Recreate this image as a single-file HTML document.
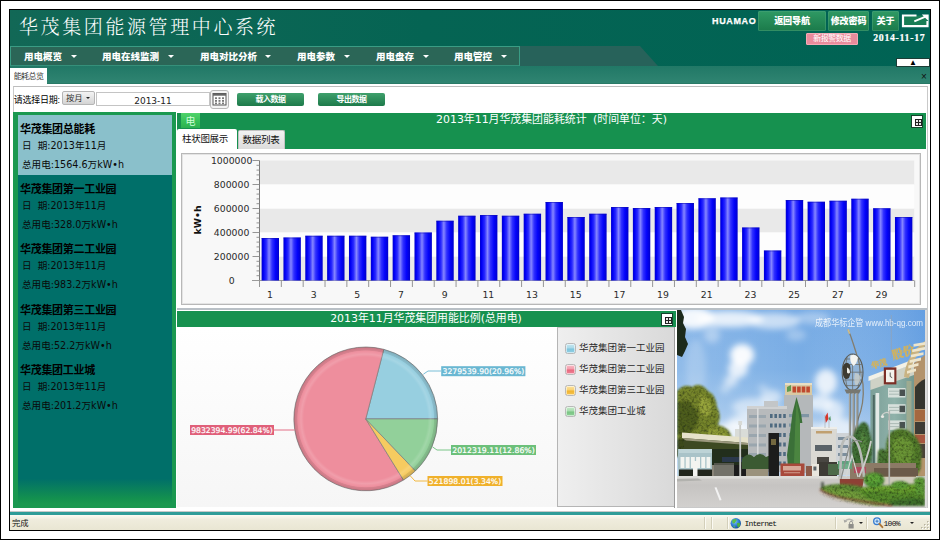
<!DOCTYPE html>
<html lang="zh-CN">
<head>
<meta charset="utf-8">
<title>华茂集团能源管理中心系统</title>
<style>
*{box-sizing:border-box;margin:0;padding:0}
html,body{width:940px;height:540px;overflow:hidden;background:#fff}
body{position:relative;font-family:"Liberation Sans","Noto Sans CJK SC",sans-serif;font-size:12px;color:#000}
.abs{position:absolute}
#outer{left:0;top:0;width:940px;height:540px;border:1px solid #000;background:#fff}
#frame{left:9px;top:9px;width:922px;height:522px;border:1px solid #000;background:#fff;overflow:hidden}
/* coordinates inside #app are page coordinates minus 10 */
#app{left:0;top:0;width:920px;height:520px}
#hdr{left:0;top:0;width:920px;height:56px;background:linear-gradient(90deg,#126856 0%,#056453 45%,#006354 100%)}
#title{left:9px;top:0.6px;height:34px;line-height:34px;font-family:"Liberation Serif","Noto Serif CJK SC",serif;font-weight:300;font-size:19px;letter-spacing:2.6px;color:#fff;white-space:nowrap}
#navshadow{left:509px;top:36px;width:140px;height:20px;background:#27625a;clip-path:polygon(0 0,121px 0,139px 20px,0 20px)}
#nav{left:0;top:36px;width:510px;height:21px;background:#2b6657;border:1px solid #3a9c84;border-bottom:2px solid #35907a}
.nv{top:37.5px;height:18px;line-height:18px;color:#fff;font-weight:900;font-size:9.5px;white-space:nowrap;letter-spacing:0}
.nv i{position:absolute;top:7.5px;width:0;height:0;border:3px solid transparent;border-top:3.5px solid #fff;margin-left:-0.5px}
#tabbar{left:0;top:56px;width:920px;height:18px;background:linear-gradient(180deg,#217866 0%,#2f8471 92%,#267461 100%)}
#tab1{left:0;top:58px;width:37px;height:16px;background:#fff;color:#3a3a3a;font-size:8px;line-height:18px;text-align:center;letter-spacing:-0.6px;white-space:nowrap}
.hb{top:1px;height:20px;border-radius:2px;background:linear-gradient(180deg,#2f9a64 0%,#1b7a4a 100%);color:#fff;font-weight:900;font-size:9.1px;line-height:20px;text-align:center;white-space:nowrap;letter-spacing:-0.2px;box-shadow:0 0 0 0.5px #4aa27c inset}

#huamao{left:702px;top:4px;height:14px;line-height:14px;font-weight:bold;font-size:9px;color:#fff;letter-spacing:0.65px;-webkit-text-stroke:0.25px #fff}
#alarm{left:796px;top:23px;width:52px;height:12px;background:#e98b9c;border:1px solid #f3aab6;border-radius:1px;color:#fff;font-size:8px;line-height:10px;text-align:center;letter-spacing:-0.5px;white-space:nowrap}
#date{left:863.2px;top:21px;height:14px;line-height:14px;font-family:"Liberation Serif",serif;font-weight:bold;font-size:9.8px;color:#fff;letter-spacing:0.7px;-webkit-text-stroke:0.2px #fff;white-space:nowrap}
#upbox{left:886px;top:48px;width:34px;height:9px;background:#fff;border:1px solid #1b3d36;font-size:8px;line-height:7px;text-align:center;color:#000}
#closex{left:909px;top:62px;width:10px;height:10px;font-size:10px;line-height:10px;color:#111;text-align:center}

#content{left:0;top:74px;width:920px;height:428px;background:#fff}
#cborder{left:2.5px;top:76px;width:915.5px;height:424px;border:1px solid #c9c9c9;border-top:1px solid #bdbdbd}
#lbl{left:3.7px;top:83px;height:14px;line-height:14px;font-size:9px;white-space:nowrap;letter-spacing:-0.25px}
#sel{left:52px;top:81px;width:33px;height:14px;border:1px solid #b5b5b5;border-radius:2px;background:linear-gradient(180deg,#f4f4f4,#d4d4d4);font-size:8.3px;line-height:12px;padding-left:3px;white-space:nowrap;color:#333}
#sel i{position:absolute;right:4px;top:5px;border:2px solid transparent;border-top:2.5px solid #222;width:0;height:0}
#din{left:86px;top:82px;width:114px;height:14px;border:1px solid #c4c4c4;background:#fff;font-family:"DejaVu Sans","Liberation Sans",sans-serif;font-size:9px;line-height:16.5px;text-align:center;color:#222}
.gb{top:83px;height:13px;border-radius:2px;background:linear-gradient(180deg,#3fa06c 0%,#1d7a4a 100%);color:#fff;font-weight:bold;font-size:8px;line-height:13px;text-align:center;letter-spacing:-0.5px;white-space:nowrap}
/* left panel */
#lp{left:3px;top:102px;width:163px;height:396px;background:linear-gradient(180deg,#006f69 0%,#006f69 93.5%,#13904f 98.5%,#1a9850 100%);border:4px solid #1a9850;border-left-width:5px;border-top-width:3px}
#lpsel{left:8px;top:104.6px;width:154px;height:60.4px;background:#8ac0cb}
.lt{left:10px;height:16px;line-height:16px;font-weight:bold;font-size:11px;white-space:nowrap;letter-spacing:-0.3px;color:#000}
.ld{left:12px;height:14px;line-height:14px;font-family:"DejaVu Sans","Noto Sans CJK SC",sans-serif;font-size:9.6px;white-space:nowrap;color:#0a0a0a}

/* chart panel */
.ph{background:#16914f}
#cph{left:167px;top:102.5px;width:749px;height:36.5px}
.ptitle{height:16px;line-height:16px;color:#fff;font-size:10.9px;text-align:center;white-space:nowrap;font-family:"DejaVu Sans","Noto Sans CJK SC",sans-serif}
#eicon{left:171px;top:102.5px;width:19px;height:15.5px;background:linear-gradient(180deg,#4fd26a 0%,#36c058 60%,#2cb050 100%);color:#d0ffd8;font-size:10px;line-height:17px;text-align:center}
#ctab1{left:167px;top:119px;width:60px;padding-right:4px;height:21px;background:#fff;border-radius:2px 2px 0 0;font-size:9.5px;line-height:20px;text-align:center;white-space:nowrap;letter-spacing:-0.3px;color:#111}
#ctab2{left:227.5px;top:120px;width:47px;height:19px;background:linear-gradient(180deg,#f2f2f2,#dcdcdc);border:1px solid #c2c2c2;border-bottom:none;border-radius:2px 2px 0 0;font-size:9.5px;line-height:18px;text-align:center;white-space:nowrap;letter-spacing:-0.3px;color:#111}
.sq{width:12px;height:13px;background:#fff;border:1px solid #14432c}
.sq:after{content:"";position:absolute;left:2.5px;top:3px;width:5px;height:5px;border:1px solid #222;background:linear-gradient(#222,#222) 50% 50%/1px 100% no-repeat,linear-gradient(#222,#222) 50% 50%/100% 1px no-repeat,#e8e8e8}
#sepline{left:167px;top:298px;width:750px;height:2px;background:#b9c0c6}
/* pie panel */
#pph{left:167px;top:301px;width:499px;height:16px}
#pright{left:664.3px;top:317px;width:1.2px;height:181px;background:#9c9c9c}
#legend{left:547px;top:317px;width:118px;height:180px;background:linear-gradient(90deg,#efefef 0%,#e4e4e4 50%,#d9d9d9 100%);border-left:1px solid #b5b5b5;border-bottom:1px solid #b5b5b5;border-top:1px solid #c6c6c6}
.lg{left:554.5px;width:11px;height:11px;border-radius:2.5px;border:1px solid #b9b9b9;box-shadow:0 0 0 1px rgba(255,255,255,.55) inset}
.lgt{left:569px;height:14px;line-height:14px;font-size:9.5px;white-space:nowrap;color:#2a2a2a}
/* status */
#under{left:0;top:498px;width:920px;height:4px;background:#fff;border-bottom:1px solid #c8c8c8}
#teal{left:0;top:502px;width:920px;height:3px;background:#2f9c98}
#status{left:0;top:505px;width:920px;height:15px;background:linear-gradient(180deg,#fbfaf2 0%,#efecdd 30%,#e9e6d3 100%)}
#status span{position:absolute;top:1px;height:15px;line-height:15px;font-size:8.3px;white-space:nowrap;color:#111}
.sdiv{top:507px;width:1px;height:12px;background:#d3cfba;border-right:1px solid #fbfaf3;box-sizing:content-box}
</style>
</head>
<body>
<div id="outer" class="abs"></div>
<div id="frame" class="abs"><div id="app" class="abs">

<div id="hdr" class="abs"></div>
<div id="title" class="abs">华茂集团能源管理中心系统</div>
<div id="navshadow" class="abs"></div>
<div id="nav" class="abs"></div>
<div class="abs nv" style="left:14px">用电概览<i style="left:47px"></i></div>
<div class="abs nv" style="left:92px">用电在线监测<i style="left:66px"></i></div>
<div class="abs nv" style="left:190px">用电对比分析<i style="left:65px"></i></div>
<div class="abs nv" style="left:287px">用电参数<i style="left:47px"></i></div>
<div class="abs nv" style="left:366px">用电盘存<i style="left:47px"></i></div>
<div class="abs nv" style="left:444px">用电管控<i style="left:47px"></i></div>
<div id="tabbar" class="abs"></div>
<div id="tab1" class="abs">能耗总览</div>


<div id="huamao" class="abs">HUAMAO</div>
<div class="abs hb" style="left:748px;width:68px">返回导航</div>
<div class="abs hb" style="left:818px;width:41px">修改密码</div>
<div class="abs hb" style="left:862px;width:27px">关于</div>
<svg class="abs" style="left:891px;top:3px" width="29" height="16" viewBox="0 0 29 16">
  <rect x="2" y="2.5" width="24.5" height="10.6" fill="#1f8456" opacity="0.8"/>
  <path d="M15.5 2.5H2V13.1H26.5V8" fill="none" stroke="#fff" stroke-width="2.2"/>
  <path d="M13.3 8.4L24.5 3.6" fill="none" stroke="#fff" stroke-width="2"/>
  <path d="M20.8 1.6H27.7V8.2Z" fill="#fff"/>
</svg>
<div id="alarm" class="abs">新报警数据</div>
<div id="date" class="abs">2014-11-17</div>
<div id="upbox" class="abs">▲</div>
<div id="closex" class="abs">×</div>
<!--TOPRIGHT-->

<div id="content" class="abs"></div>
<div id="cborder" class="abs"></div>
<div id="lbl" class="abs">请选择日期:</div>
<div id="sel" class="abs">按月<i></i></div>
<div id="din" class="abs">2013-11</div>
<svg class="abs" style="left:199.8px;top:80px" width="19" height="19" viewBox="0 0 19 19">
 <rect x="0.5" y="0.5" width="18" height="18" rx="2.5" fill="#f4f4f4" stroke="#b9b9b9"/>
 <rect x="3" y="3.5" width="13" height="11.5" fill="#fff" stroke="#555" stroke-width="1"/>
 <rect x="3" y="3.5" width="13" height="2.2" fill="#666"/>
 <g fill="#777"><rect x="5" y="7.3" width="2" height="1.8"/><rect x="8.5" y="7.3" width="2" height="1.8"/><rect x="12" y="7.3" width="2" height="1.8"/>
 <rect x="5" y="10" width="2" height="1.8"/><rect x="8.5" y="10" width="2" height="1.8"/><rect x="12" y="10" width="2" height="1.8"/>
 <rect x="5" y="12.6" width="2" height="1.6"/><rect x="8.5" y="12.6" width="2" height="1.6"/><rect x="12" y="12.6" width="2" height="1.6"/></g>
</svg>
<div class="abs gb" style="left:227px;width:67px">载入数据</div>
<div class="abs gb" style="left:308px;width:67px">导出数据</div>
<div id="lp" class="abs"></div>
<div id="lpsel" class="abs"></div>
<div class="abs lt" style="top:110.5px">华茂集团总能耗</div>
<div class="abs ld" style="top:129px">日&nbsp;&nbsp;期:2013年11月</div>
<div class="abs ld" style="top:147.5px">总用电:1564.6万kW•h</div>
<div class="abs lt" style="top:170.5px">华茂集团第一工业园</div>
<div class="abs ld" style="top:189px">日&nbsp;&nbsp;期:2013年11月</div>
<div class="abs ld" style="top:207.5px">总用电:328.0万kW•h</div>
<div class="abs lt" style="top:230.5px">华茂集团第二工业园</div>
<div class="abs ld" style="top:249px">日&nbsp;&nbsp;期:2013年11月</div>
<div class="abs ld" style="top:267.5px">总用电:983.2万kW•h</div>
<div class="abs lt" style="top:291.5px">华茂集团第三工业园</div>
<div class="abs ld" style="top:310px">日&nbsp;&nbsp;期:2013年11月</div>
<div class="abs ld" style="top:328.5px">总用电:52.2万kW•h</div>
<div class="abs lt" style="top:351.5px">华茂集团工业城</div>
<div class="abs ld" style="top:370px">日&nbsp;&nbsp;期:2013年11月</div>
<div class="abs ld" style="top:388.5px">总用电:201.2万kW•h</div>

<div id="cph" class="abs ph"></div>
<div class="abs ptitle" style="left:167px;top:102px;width:749px;word-spacing:3px">2013年11月华茂集团能耗统计 (时间单位：天)</div>
<div id="eicon" class="abs">电</div>
<div id="ctab1" class="abs">柱状图展示</div>
<div id="ctab2" class="abs">数据列表</div>
<div class="abs sq" style="left:901px;top:105px"></div>
<svg class="abs" style="left:171px;top:143px" width="740" height="152" viewBox="0 0 740 152" font-family="DejaVu Sans, Liberation Sans, sans-serif">
<defs><linearGradient id="bg" x1="0" x2="1" y1="0" y2="0"><stop offset="0" stop-color="#0000cc"/><stop offset="0.1" stop-color="#0000f6"/><stop offset="0.27" stop-color="#2a2aff"/><stop offset="0.43" stop-color="#8686ff"/><stop offset="0.6" stop-color="#3030ff"/><stop offset="0.8" stop-color="#0404fa"/><stop offset="1" stop-color="#0000cc"/></linearGradient></defs>
<rect x="0.5" y="0.5" width="739" height="151" fill="#f8f8f8" stroke="#b8b8b8"/>
<rect x="1.5" y="1.5" width="737" height="149" fill="none" stroke="#e4e4e4"/>
<rect x="78.0" y="103.50" width="655.2" height="24.00" fill="#e9e9e9"/>
<rect x="78.0" y="55.50" width="655.2" height="24.00" fill="#e9e9e9"/>
<rect x="78.0" y="7.50" width="655.2" height="24.00" fill="#e9e9e9"/>
<rect x="78.0" y="79.50" width="655.2" height="24.00" fill="#fdfdfd"/>
<rect x="78.0" y="31.50" width="655.2" height="24.00" fill="#fdfdfd"/>
<path d="M78.5 7.5V128.0" stroke="#7a7a7a" stroke-width="1" fill="none"/>
<path d="M71.5 127.50h7M75.5 122.70h3M75.5 117.90h3M75.5 113.10h3M75.5 108.30h3M71.5 103.50h7M75.5 98.70h3M75.5 93.90h3M75.5 89.10h3M75.5 84.30h3M71.5 79.50h7M75.5 74.70h3M75.5 69.90h3M75.5 65.10h3M75.5 60.30h3M71.5 55.50h7M75.5 50.70h3M75.5 45.90h3M75.5 41.10h3M75.5 36.30h3M71.5 31.50h7M75.5 26.70h3M75.5 21.90h3M75.5 17.10h3M75.5 12.30h3M71.5 7.50h7" stroke="#8a8a8a" stroke-width="0.9" fill="none"/>
<text x="50.6" y="130.9" font-size="9.3" text-anchor="middle" fill="#2a2a2a">0</text>
<text x="50.6" y="106.9" font-size="9.3" text-anchor="middle" fill="#2a2a2a">200000</text>
<text x="50.6" y="82.9" font-size="9.3" text-anchor="middle" fill="#2a2a2a">400000</text>
<text x="50.6" y="58.9" font-size="9.3" text-anchor="middle" fill="#2a2a2a">600000</text>
<text x="50.6" y="34.9" font-size="9.3" text-anchor="middle" fill="#2a2a2a">800000</text>
<text x="50.6" y="10.9" font-size="9.3" text-anchor="middle" fill="#2a2a2a">1000000</text>
<text transform="translate(19.5 67.0) rotate(-90)" font-size="9.3" font-weight="bold" text-anchor="middle" fill="#111">kW•h</text>
<path d="M71.0 127.5H733.2" stroke="#9a9a9a" stroke-width="1" fill="none"/>
<path d="M78.50 127.5v6.5M100.34 127.5v6.5M122.18 127.5v6.5M144.02 127.5v6.5M165.86 127.5v6.5M187.70 127.5v6.5M209.54 127.5v6.5M231.38 127.5v6.5M253.22 127.5v6.5M275.06 127.5v6.5M296.90 127.5v6.5M318.74 127.5v6.5M340.58 127.5v6.5M362.42 127.5v6.5M384.26 127.5v6.5M406.10 127.5v6.5M427.94 127.5v6.5M449.78 127.5v6.5M471.62 127.5v6.5M493.46 127.5v6.5M515.30 127.5v6.5M537.14 127.5v6.5M558.98 127.5v6.5M580.82 127.5v6.5M602.66 127.5v6.5M624.50 127.5v6.5M646.34 127.5v6.5M668.18 127.5v6.5M690.02 127.5v6.5M711.86 127.5v6.5M733.70 127.5v6.5" stroke="#8a8a8a" stroke-width="0.9" fill="none"/>
<text x="88.9" y="145.0" font-size="9.3" text-anchor="middle" fill="#2a2a2a">1</text>
<text x="132.6" y="145.0" font-size="9.3" text-anchor="middle" fill="#2a2a2a">3</text>
<text x="176.3" y="145.0" font-size="9.3" text-anchor="middle" fill="#2a2a2a">5</text>
<text x="220.0" y="145.0" font-size="9.3" text-anchor="middle" fill="#2a2a2a">7</text>
<text x="263.6" y="145.0" font-size="9.3" text-anchor="middle" fill="#2a2a2a">9</text>
<text x="307.3" y="145.0" font-size="9.3" text-anchor="middle" fill="#2a2a2a">11</text>
<text x="351.0" y="145.0" font-size="9.3" text-anchor="middle" fill="#2a2a2a">13</text>
<text x="394.7" y="145.0" font-size="9.3" text-anchor="middle" fill="#2a2a2a">15</text>
<text x="438.4" y="145.0" font-size="9.3" text-anchor="middle" fill="#2a2a2a">17</text>
<text x="482.0" y="145.0" font-size="9.3" text-anchor="middle" fill="#2a2a2a">19</text>
<text x="525.7" y="145.0" font-size="9.3" text-anchor="middle" fill="#2a2a2a">21</text>
<text x="569.4" y="145.0" font-size="9.3" text-anchor="middle" fill="#2a2a2a">23</text>
<text x="613.1" y="145.0" font-size="9.3" text-anchor="middle" fill="#2a2a2a">25</text>
<text x="656.8" y="145.0" font-size="9.3" text-anchor="middle" fill="#2a2a2a">27</text>
<text x="700.4" y="145.0" font-size="9.3" text-anchor="middle" fill="#2a2a2a">29</text>
<rect x="80.60" y="85.00" width="17.4" height="42.50" fill="url(#bg)"/>
<rect x="80.60" y="85.00" width="17.4" height="1" fill="#1010b0" opacity="0.55"/>
<rect x="102.44" y="84.50" width="17.4" height="43.00" fill="url(#bg)"/>
<rect x="102.44" y="84.50" width="17.4" height="1" fill="#1010b0" opacity="0.55"/>
<rect x="124.28" y="82.75" width="17.4" height="44.75" fill="url(#bg)"/>
<rect x="124.28" y="82.75" width="17.4" height="1" fill="#1010b0" opacity="0.55"/>
<rect x="146.12" y="82.75" width="17.4" height="44.75" fill="url(#bg)"/>
<rect x="146.12" y="82.75" width="17.4" height="1" fill="#1010b0" opacity="0.55"/>
<rect x="167.96" y="82.75" width="17.4" height="44.75" fill="url(#bg)"/>
<rect x="167.96" y="82.75" width="17.4" height="1" fill="#1010b0" opacity="0.55"/>
<rect x="189.80" y="83.75" width="17.4" height="43.75" fill="url(#bg)"/>
<rect x="189.80" y="83.75" width="17.4" height="1" fill="#1010b0" opacity="0.55"/>
<rect x="211.64" y="82.25" width="17.4" height="45.25" fill="url(#bg)"/>
<rect x="211.64" y="82.25" width="17.4" height="1" fill="#1010b0" opacity="0.55"/>
<rect x="233.48" y="79.50" width="17.4" height="48.00" fill="url(#bg)"/>
<rect x="233.48" y="79.50" width="17.4" height="1" fill="#1010b0" opacity="0.55"/>
<rect x="255.32" y="67.75" width="17.4" height="59.75" fill="url(#bg)"/>
<rect x="255.32" y="67.75" width="17.4" height="1" fill="#1010b0" opacity="0.55"/>
<rect x="277.16" y="62.75" width="17.4" height="64.75" fill="url(#bg)"/>
<rect x="277.16" y="62.75" width="17.4" height="1" fill="#1010b0" opacity="0.55"/>
<rect x="299.00" y="62.00" width="17.4" height="65.50" fill="url(#bg)"/>
<rect x="299.00" y="62.00" width="17.4" height="1" fill="#1010b0" opacity="0.55"/>
<rect x="320.84" y="62.75" width="17.4" height="64.75" fill="url(#bg)"/>
<rect x="320.84" y="62.75" width="17.4" height="1" fill="#1010b0" opacity="0.55"/>
<rect x="342.68" y="60.75" width="17.4" height="66.75" fill="url(#bg)"/>
<rect x="342.68" y="60.75" width="17.4" height="1" fill="#1010b0" opacity="0.55"/>
<rect x="364.52" y="49.00" width="17.4" height="78.50" fill="url(#bg)"/>
<rect x="364.52" y="49.00" width="17.4" height="1" fill="#1010b0" opacity="0.55"/>
<rect x="386.36" y="64.00" width="17.4" height="63.50" fill="url(#bg)"/>
<rect x="386.36" y="64.00" width="17.4" height="1" fill="#1010b0" opacity="0.55"/>
<rect x="408.20" y="60.75" width="17.4" height="66.75" fill="url(#bg)"/>
<rect x="408.20" y="60.75" width="17.4" height="1" fill="#1010b0" opacity="0.55"/>
<rect x="430.04" y="54.00" width="17.4" height="73.50" fill="url(#bg)"/>
<rect x="430.04" y="54.00" width="17.4" height="1" fill="#1010b0" opacity="0.55"/>
<rect x="451.88" y="55.00" width="17.4" height="72.50" fill="url(#bg)"/>
<rect x="451.88" y="55.00" width="17.4" height="1" fill="#1010b0" opacity="0.55"/>
<rect x="473.72" y="54.00" width="17.4" height="73.50" fill="url(#bg)"/>
<rect x="473.72" y="54.00" width="17.4" height="1" fill="#1010b0" opacity="0.55"/>
<rect x="495.56" y="50.00" width="17.4" height="77.50" fill="url(#bg)"/>
<rect x="495.56" y="50.00" width="17.4" height="1" fill="#1010b0" opacity="0.55"/>
<rect x="517.40" y="45.25" width="17.4" height="82.25" fill="url(#bg)"/>
<rect x="517.40" y="45.25" width="17.4" height="1" fill="#1010b0" opacity="0.55"/>
<rect x="539.24" y="44.50" width="17.4" height="83.00" fill="url(#bg)"/>
<rect x="539.24" y="44.50" width="17.4" height="1" fill="#1010b0" opacity="0.55"/>
<rect x="561.08" y="74.50" width="17.4" height="53.00" fill="url(#bg)"/>
<rect x="561.08" y="74.50" width="17.4" height="1" fill="#1010b0" opacity="0.55"/>
<rect x="582.92" y="97.50" width="17.4" height="30.00" fill="url(#bg)"/>
<rect x="582.92" y="97.50" width="17.4" height="1" fill="#1010b0" opacity="0.55"/>
<rect x="604.76" y="47.00" width="17.4" height="80.50" fill="url(#bg)"/>
<rect x="604.76" y="47.00" width="17.4" height="1" fill="#1010b0" opacity="0.55"/>
<rect x="626.60" y="48.75" width="17.4" height="78.75" fill="url(#bg)"/>
<rect x="626.60" y="48.75" width="17.4" height="1" fill="#1010b0" opacity="0.55"/>
<rect x="648.44" y="47.75" width="17.4" height="79.75" fill="url(#bg)"/>
<rect x="648.44" y="47.75" width="17.4" height="1" fill="#1010b0" opacity="0.55"/>
<rect x="670.28" y="45.75" width="17.4" height="81.75" fill="url(#bg)"/>
<rect x="670.28" y="45.75" width="17.4" height="1" fill="#1010b0" opacity="0.55"/>
<rect x="692.12" y="55.25" width="17.4" height="72.25" fill="url(#bg)"/>
<rect x="692.12" y="55.25" width="17.4" height="1" fill="#1010b0" opacity="0.55"/>
<rect x="713.96" y="64.00" width="17.4" height="63.50" fill="url(#bg)"/>
<rect x="713.96" y="64.00" width="17.4" height="1" fill="#1010b0" opacity="0.55"/>
</svg>
<div id="sepline" class="abs"></div>
<div id="pph" class="abs ph"></div>
<div class="abs ptitle" style="left:167px;top:301px;width:498px">2013年11月华茂集团用能比例(总用电)</div>
<div class="abs sq" style="left:651px;top:303px"></div>
<svg class="abs" style="left:167px;top:317px" width="380" height="180" viewBox="0 0 380 180" font-family="DejaVu Sans, Liberation Sans, sans-serif">
<defs><radialGradient id="pg" cx="0.5" cy="0.5" r="0.5"><stop offset="0" stop-color="#fff" stop-opacity="0"/><stop offset="0.86" stop-color="#fff" stop-opacity="0"/><stop offset="0.9" stop-color="#fff" stop-opacity="0.14"/><stop offset="0.94" stop-color="#fff" stop-opacity="0.02"/><stop offset="0.955" stop-color="#000" stop-opacity="0.09"/><stop offset="1" stop-color="#000" stop-opacity="0.17"/></radialGradient><linearGradient id="pbg" x1="0" x2="0" y1="0" y2="1"><stop offset="0" stop-color="#ffffff"/><stop offset="1" stop-color="#f6f6f6"/></linearGradient></defs>
<rect x="0" y="0" width="380" height="180" fill="url(#pbg)"/>
<path d="M188.75 91.90L260.65 91.90A71.9 71.9 0 0 0 206.81 22.30Z" fill="#97cfe0" stroke="#7d7d7d" stroke-width="0.7" stroke-linejoin="round"/>
<path d="M188.75 91.90L206.81 22.30A71.9 71.9 0 1 0 226.51 153.09Z" fill="#ee8e9d" stroke="#7d7d7d" stroke-width="0.7" stroke-linejoin="round"/>
<path d="M188.75 91.90L226.51 153.09A71.9 71.9 0 0 0 238.43 143.88Z" fill="#f6cb60" stroke="#7d7d7d" stroke-width="0.7" stroke-linejoin="round"/>
<path d="M188.75 91.90L238.43 143.88A71.9 71.9 0 0 0 260.65 91.90Z" fill="#92d09a" stroke="#7d7d7d" stroke-width="0.7" stroke-linejoin="round"/>
<circle cx="188.75" cy="91.89999999999998" r="71.9" fill="url(#pg)"/>
<path d="M246.4 47.2L251.0 44H264" fill="none" stroke="#6ab7d2" stroke-width="0.9"/>
<rect x="264.2" y="39.2" width="84.2" height="10.0" fill="#6ab7d2"/>
<text x="306.4" y="47.0" font-size="7.7" text-anchor="middle" fill="#fff" stroke="#fff" stroke-width="0.2" textLength="81.8" lengthAdjust="spacingAndGlyphs">3279539.90(20.96%)</text>
<path d="M97 103H117.5" fill="none" stroke="#e0607a" stroke-width="0.9"/>
<rect x="13.0" y="98.0" width="84.0" height="10.0" fill="#e0607a"/>
<text x="55.0" y="105.8" font-size="7.7" text-anchor="middle" fill="#fff" stroke="#fff" stroke-width="0.2" textLength="81.5" lengthAdjust="spacingAndGlyphs">9832394.99(62.84%)</text>
<path d="M255.7 120.0L260.0 123H274" fill="none" stroke="#6cc07a" stroke-width="0.9"/>
<rect x="274.0" y="118.0" width="85.0" height="10.0" fill="#6cc07a"/>
<text x="316.5" y="125.8" font-size="7.7" text-anchor="middle" fill="#fff" stroke="#fff" stroke-width="0.2" textLength="82.5" lengthAdjust="spacingAndGlyphs">2012319.11(12.86%)</text>
<path d="M233.3 148.9L238.0 154H250.5" fill="none" stroke="#f0b12c" stroke-width="0.9"/>
<rect x="250.5" y="149.0" width="75.0" height="10.0" fill="#f0b12c"/>
<text x="288.0" y="156.8" font-size="7.7" text-anchor="middle" fill="#fff" stroke="#fff" stroke-width="0.2" textLength="72.5" lengthAdjust="spacingAndGlyphs">521898.01(3.34%)</text>
</svg>
<div id="legend" class="abs"></div>
<div id="pright" class="abs"></div>
<div class="abs lg" style="top:332.5px;background:linear-gradient(180deg,#c4e6f0 0%,#a9d9e8 48%,#7cc4dc 52%,#93cfe2 100%)"></div><div class="abs lgt" style="top:331px">华茂集团第一工业园</div>
<div class="abs lg" style="top:353.5px;background:linear-gradient(180deg,#f8bcc6 0%,#f29aa9 48%,#e8667c 52%,#ee8497 100%)"></div><div class="abs lgt" style="top:352px">华茂集团第二工业园</div>
<div class="abs lg" style="top:374.5px;background:linear-gradient(180deg,#fce29e 0%,#f8d070 48%,#f0b32c 52%,#f5c350 100%)"></div><div class="abs lgt" style="top:373px">华茂集团第三工业园</div>
<div class="abs lg" style="top:395.5px;background:linear-gradient(180deg,#c4e8c8 0%,#a6dbac 48%,#78c482 52%,#90d098 100%)"></div><div class="abs lgt" style="top:394px">华茂集团工业城</div>
<svg class="abs" style="left:667px;top:300px" width="248" height="197" viewBox="-1 -1 248 197" preserveAspectRatio="none">
<defs>
<linearGradient id="sky" x1="0" x2="0" y1="0" y2="1"><stop offset="0" stop-color="#74a9e4"/><stop offset="0.3" stop-color="#7cafe5"/><stop offset="0.5" stop-color="#98c0ea"/><stop offset="0.66" stop-color="#b6d1ee"/><stop offset="1" stop-color="#cfdff1"/></linearGradient>
<linearGradient id="skyr" x1="0" x2="1" y1="0" y2="0"><stop offset="0" stop-color="#fff" stop-opacity="0.16"/><stop offset="0.5" stop-color="#fff" stop-opacity="0"/><stop offset="1" stop-color="#2c78d8" stop-opacity="0.22"/></linearGradient>
<linearGradient id="road" x1="0" x2="0" y1="0" y2="1"><stop offset="0" stop-color="#cfcdca"/><stop offset="0.3" stop-color="#c6c4c2"/><stop offset="1" stop-color="#d2d0ce"/></linearGradient>
<linearGradient id="tealb" x1="0" x2="1" y1="0" y2="0"><stop offset="0" stop-color="#7c9f98"/><stop offset="0.55" stop-color="#8fb2aa"/><stop offset="1" stop-color="#74988f"/></linearGradient>
<filter id="b4" x="-30%" y="-30%" width="160%" height="160%"><feGaussianBlur stdDeviation="3.2"/></filter>
<filter id="b2" x="-30%" y="-30%" width="160%" height="160%"><feGaussianBlur stdDeviation="1.7"/></filter>
<filter id="b1" x="-20%" y="-20%" width="140%" height="140%"><feGaussianBlur stdDeviation="0.9"/></filter>
<filter id="tx" x="-10%" y="-10%" width="120%" height="120%"><feGaussianBlur stdDeviation="0.9" result="b"/><feTurbulence type="fractalNoise" baseFrequency="0.42" numOctaves="2" seed="7" result="n"/><feColorMatrix in="n" type="matrix" values="0 0 0 0 0  0 0 0 0 0  0 0 0 0 0  2.2 0 0 0 -0.85" result="a"/><feFlood flood-color="#16240c" flood-opacity="0.75"/><feComposite in2="a" operator="in" result="dk"/><feGaussianBlur in="dk" stdDeviation="0.5" result="dk2"/><feComposite in="dk2" in2="b" operator="atop"/></filter>
<filter id="b05" x="-5%" y="-5%" width="110%" height="110%"><feGaussianBlur stdDeviation="0.45"/></filter>
<clipPath id="pc"><rect x="-1" y="-1" width="248" height="197"/></clipPath>
</defs>
<g clip-path="url(#pc)">
<rect x="-1" y="-1" width="248" height="197" fill="url(#sky)"/><rect x="-1" y="-1" width="248" height="131" fill="url(#skyr)"/>
<g filter="url(#b4)" fill="#fff">
<ellipse cx="16" cy="7" rx="20" ry="11" opacity="0.9"/>
<ellipse cx="52" cy="8" rx="34" ry="8" opacity="0.8"/>
<ellipse cx="96" cy="10" rx="26" ry="8" opacity="0.6"/>
<ellipse cx="134" cy="7" rx="18" ry="6" opacity="0.35"/>
<ellipse cx="34" cy="24" rx="8" ry="8" opacity="0.35"/>
<ellipse cx="118" cy="24" rx="10" ry="6" opacity="0.3"/>
<ellipse cx="64" cy="44" rx="12" ry="11" opacity="0.95"/>
<ellipse cx="60" cy="58" rx="10" ry="9" opacity="0.8"/>
<ellipse cx="53" cy="70" rx="7" ry="6" opacity="0.6"/>
<ellipse cx="47" cy="78" rx="5" ry="4" opacity="0.4"/>
<ellipse cx="93" cy="86" rx="11" ry="7" opacity="0.55"/>
<ellipse cx="76" cy="96" rx="22" ry="9" opacity="0.5"/>
<ellipse cx="85" cy="77" rx="5" ry="3" opacity="0.4"/>
<ellipse cx="72" cy="112" rx="22" ry="10" opacity="0.6"/>
<ellipse cx="100" cy="104" rx="14" ry="7" opacity="0.4"/>
<ellipse cx="54" cy="120" rx="18" ry="9" opacity="0.7"/>
<ellipse cx="148" cy="71" rx="11" ry="13" opacity="0.8"/>
<ellipse cx="142" cy="92" rx="13" ry="8" opacity="0.7"/>
<ellipse cx="156" cy="99" rx="10" ry="10" opacity="0.6"/>
<ellipse cx="160" cy="118" rx="18" ry="11" opacity="0.65"/>
<ellipse cx="134" cy="120" rx="14" ry="9" opacity="0.45"/>
<ellipse cx="18" cy="58" rx="10" ry="30" opacity="0.2"/>
</g>
<text x="137" y="15" font-family="Liberation Sans, Noto Sans CJK SC, sans-serif" font-size="9.5" fill="#fff" opacity="0.8" textLength="108" lengthAdjust="spacingAndGlyphs">成都华标企管 www.hb-qg.com</text>
<g filter="url(#b05)">
<path d="M-1 -1H3L6 6L5 12L8 18L7 26L10 33L7 40L4 46L-1 44Z" fill="#1d2a1c"/>
<rect x="107" y="72" width="27" height="12" fill="#d9c9a3"/>
<rect x="107" y="72" width="27" height="2" fill="#e9dfc4"/>
<path d="M109 76l4-2v6l-4 1z" fill="#5f9a50"/>
<rect x="114.5" y="75.5" width="3.6" height="6" fill="#c0482e"/>
<rect x="119.1" y="75.5" width="3.6" height="6" fill="#c0482e"/>
<rect x="123.7" y="75.5" width="3.6" height="6" fill="#c0482e"/>
<rect x="128.3" y="75.5" width="3.6" height="6" fill="#c0482e"/>
<rect x="106" y="84" width="29" height="76" fill="#b4b8ba"/>
<rect x="69" y="95" width="40" height="66" fill="#b7babc"/>
<rect x="69" y="95" width="40" height="3" fill="#cfd1d2"/>
<rect x="86" y="90" width="14" height="6" fill="#c3c6c8"/>
<rect x="92.0" y="103.0" width="2.6" height="4" fill="#4f6a80"/>
<rect x="96.4" y="103.0" width="2.6" height="4" fill="#4f6a80"/>
<rect x="100.8" y="103.0" width="2.6" height="4" fill="#4f6a80"/>
<rect x="105.2" y="103.0" width="2.6" height="4" fill="#4f6a80"/>
<rect x="71" y="104.0" width="17" height="3" fill="#9aa6ae"/>
<rect x="111" y="103.0" width="20" height="3.2" fill="#7f95a4"/>
<rect x="92.0" y="112.5" width="2.6" height="4" fill="#4f6a80"/>
<rect x="96.4" y="112.5" width="2.6" height="4" fill="#4f6a80"/>
<rect x="100.8" y="112.5" width="2.6" height="4" fill="#4f6a80"/>
<rect x="105.2" y="112.5" width="2.6" height="4" fill="#4f6a80"/>
<rect x="71" y="113.5" width="17" height="3" fill="#9aa6ae"/>
<rect x="111" y="112.5" width="20" height="3.2" fill="#7f95a4"/>
<rect x="92.0" y="122.0" width="2.6" height="4" fill="#4f6a80"/>
<rect x="96.4" y="122.0" width="2.6" height="4" fill="#4f6a80"/>
<rect x="100.8" y="122.0" width="2.6" height="4" fill="#4f6a80"/>
<rect x="105.2" y="122.0" width="2.6" height="4" fill="#4f6a80"/>
<rect x="71" y="123.0" width="17" height="3" fill="#9aa6ae"/>
<rect x="111" y="122.0" width="20" height="3.2" fill="#7f95a4"/>
<rect x="92.0" y="131.5" width="2.6" height="4" fill="#4f6a80"/>
<rect x="96.4" y="131.5" width="2.6" height="4" fill="#4f6a80"/>
<rect x="100.8" y="131.5" width="2.6" height="4" fill="#4f6a80"/>
<rect x="105.2" y="131.5" width="2.6" height="4" fill="#4f6a80"/>
<rect x="71" y="132.5" width="17" height="3" fill="#9aa6ae"/>
<rect x="111" y="131.5" width="20" height="3.2" fill="#7f95a4"/>
<rect x="92.0" y="141.0" width="2.6" height="4" fill="#4f6a80"/>
<rect x="96.4" y="141.0" width="2.6" height="4" fill="#4f6a80"/>
<rect x="100.8" y="141.0" width="2.6" height="4" fill="#4f6a80"/>
<rect x="105.2" y="141.0" width="2.6" height="4" fill="#4f6a80"/>
<rect x="71" y="142.0" width="17" height="3" fill="#9aa6ae"/>
<rect x="111" y="141.0" width="20" height="3.2" fill="#7f95a4"/>
<rect x="92.0" y="150.5" width="2.6" height="4" fill="#4f6a80"/>
<rect x="96.4" y="150.5" width="2.6" height="4" fill="#4f6a80"/>
<rect x="100.8" y="150.5" width="2.6" height="4" fill="#4f6a80"/>
<rect x="105.2" y="150.5" width="2.6" height="4" fill="#4f6a80"/>
<rect x="71" y="151.5" width="17" height="3" fill="#9aa6ae"/>
<rect x="111" y="150.5" width="20" height="3.2" fill="#7f95a4"/>
<rect x="79" y="97" width="1.6" height="62" fill="#d8dadb"/>
<rect x="57" y="118" width="13" height="42" fill="#d9dcd8"/>
<path d="M118.5 86L123 102L126 124L128 146L127 156H110L109 144L112 122L114.5 102Z" fill="#3a7038"/>
<path d="M118.5 90L121.5 108L123 130L123.5 152H116L117 120Z" fill="#528c44" opacity="0.75"/>
<rect x="122" y="112" width="12" height="50" fill="#b5b8ba"/>
<rect x="133" y="116" width="26" height="50" fill="#dad9d3"/>
<rect x="133" y="116" width="26" height="2" fill="#eeeeea"/>
<rect x="138" y="120" width="16" height="2.5" fill="#c0a070"/>
<rect x="137" y="134" width="17" height="6" fill="#5a6468"/>
<rect x="139" y="146" width="12" height="12" fill="#4a4642"/>
<rect x="158" y="122" width="14" height="42" fill="#cfd3d6"/>
<rect x="160" y="126" width="10" height="3" fill="#7c8e9c"/>
<rect x="160" y="134" width="10" height="3" fill="#7c8e9c"/>
<rect x="160" y="142" width="10" height="3" fill="#7c8e9c"/>
<rect x="160" y="150" width="10" height="3" fill="#7c8e9c"/>
<path d="M147 106l2.6-4.5l0.8 6.5l-2.6 4z" fill="#d8352c"/><path d="M150.5 108l1.8-3l0.5 5z" fill="#3c8a4a"/>
<path d="M147 104v13M151 106v11" stroke="#999" stroke-width="0.5"/>
<path d="M192.4 70L236 54V160H192.4Z" fill="url(#tealb)"/>
<path d="M192.4 69L236 52.5V64L192.4 79Z" fill="#cfd2c6"/>
<path d="M190.5 65.5L236.5 48V52.5L190.5 70Z" fill="#f3f1e6"/>
<rect x="210" y="77.0" width="17.5" height="9.5" fill="#dfe6e1" opacity="0.9"/>
<rect x="221.5" y="78.5" width="5.5" height="6.5" fill="#2f3838" opacity="0.85"/>
<path d="M211 80.2h10M211 83.2h10" stroke="#9fb1ab" stroke-width="0.8"/>
<rect x="210" y="93.2" width="17.5" height="9.5" fill="#dfe6e1" opacity="0.9"/>
<rect x="221.5" y="94.7" width="5.5" height="6.5" fill="#2f3838" opacity="0.85"/>
<path d="M211 96.4h10M211 99.4h10" stroke="#9fb1ab" stroke-width="0.8"/>
<rect x="210" y="109.4" width="17.5" height="9.5" fill="#dfe6e1" opacity="0.9"/>
<rect x="221.5" y="110.9" width="5.5" height="6.5" fill="#2f3838" opacity="0.85"/>
<path d="M211 112.6h10M211 115.6h10" stroke="#9fb1ab" stroke-width="0.8"/>
<rect x="210" y="125.6" width="17.5" height="9.5" fill="#dfe6e1" opacity="0.9"/>
<rect x="221.5" y="127.1" width="5.5" height="6.5" fill="#2f3838" opacity="0.85"/>
<path d="M211 128.8h10M211 131.8h10" stroke="#9fb1ab" stroke-width="0.8"/>
<rect x="210" y="141.8" width="17.5" height="9.5" fill="#dfe6e1" opacity="0.9"/>
<rect x="221.5" y="143.3" width="5.5" height="6.5" fill="#2f3838" opacity="0.85"/>
<path d="M211 145.0h10M211 148.0h10" stroke="#9fb1ab" stroke-width="0.8"/>
<rect x="210" y="158.0" width="17.5" height="9.5" fill="#dfe6e1" opacity="0.9"/>
<rect x="221.5" y="159.5" width="5.5" height="6.5" fill="#2f3838" opacity="0.85"/>
<path d="M211 161.2h10M211 164.2h10" stroke="#9fb1ab" stroke-width="0.8"/>
<rect x="197.6" y="82" width="3.6" height="78" fill="#eef1ee" opacity="0.9"/>
<rect x="194.8" y="84" width="2" height="76" fill="#3f5650" opacity="0.75"/>
<rect x="228.5" y="70" width="5" height="90" fill="#b9b48c" opacity="0.55"/>
<rect x="205.8" y="56.4" width="12.6" height="17" fill="#7b2f27"/><rect x="208" y="58.8" width="8.3" height="12.4" fill="#f4f2ec"/><path d="M212.2 61.5v4l2 1.2" stroke="#333" stroke-width="0.8" fill="none"/>
<g font-family="Liberation Serif, Noto Serif CJK SC, serif" font-weight="900" fill="#d2b25c" stroke="#d2b25c" stroke-width="0.3"><text x="194" y="58" font-size="8.2" transform="rotate(-16 194 58)">华茂</text><text x="215" y="48.5" font-size="11.5" transform="rotate(-16 215 47.5)">股份</text></g>
<path d="M213.3 4v43" stroke="#97a0aa" stroke-width="0.6"/>
<path d="M236 52L247 44V165H236Z" fill="#b3936c"/>
<path d="M226 66Q228 44 247 30V35Q233 48 231 67Z" fill="#c9b383"/>
<path d="M229.0 60.0l9.0 -2.6v2.8l-9.0 2.6z" fill="#efe6cc"/>
<path d="M230.3 54.6l10.2 -2.6v2.8l-10.2 2.6z" fill="#efe6cc"/>
<path d="M231.6 49.2l11.4 -2.6v2.8l-11.4 2.6z" fill="#efe6cc"/>
<path d="M232.9 43.8l12.6 -2.6v2.8l-12.6 2.6z" fill="#efe6cc"/>
<path d="M234.2 38.4l13.8 -2.6v2.8l-13.8 2.6z" fill="#efe6cc"/>
<path d="M235.5 33.0l15.0 -2.6v2.8l-15.0 2.6z" fill="#efe6cc"/>
<path d="M237 76Q242 70 247 68V98H237Z" fill="#35342f"/>
<rect x="237" y="99" width="10" height="11" fill="#a5683f"/>
<rect x="237" y="111" width="10" height="12" fill="#3d3a36"/>
<rect x="237" y="124" width="10" height="8" fill="#a7573f"/>
<rect x="237" y="133" width="10" height="14" fill="#4a4038"/>
<path d="M170 18.4Q172.6 24 174.7 31Q182 52 185 73.4Q186.6 92 179.8 109Q177 118 176 130" fill="none" stroke="#837d6e" stroke-width="1.3"/>
<path d="M170 18.4l1.6 4.4" stroke="#cdbd8c" stroke-width="1.7"/>
<ellipse cx="174.6" cy="61.2" rx="10.4" ry="18.2" fill="#9fb7cc" opacity="0.55"/>
<ellipse cx="174.6" cy="61.2" rx="10.4" ry="18.2" fill="none" stroke="#5b5b55" stroke-width="1.1"/>
<path d="M174.6 43v36.4M169.2 45.6Q165.4 61 169.2 76.8M180 45.6Q183.8 61 180 76.8M165.3 53.5h18.6M164.3 61.2h20.6M165.3 69h18.6M167.6 74.6h14M167.6 48h14" fill="none" stroke="#66665f" stroke-width="0.7"/>
<path d="M165 55q3.5-6 7-1q1.6 7-1 13q-4.4 3-6-3z" fill="#3e3a30"/><path d="M172.4 44.6q5-2.4 7.6 2q-1 6-4.4 8.4q-4.2-3.4-3.2-10.4z" fill="#f4f4f0"/><path d="M169 56.5q3 1 3 5q-1.6 2-3 0z" fill="#f0f0ea"/><path d="M177 62q4 0 5.6 4.4q-1 7-5 8q-2.4-5.4-0.6-12.4z" fill="#c9cdc8" opacity="0.8"/>
<path d="M166.5 78.6h16.6l-2 4h-12.6z" fill="#77776f"/>
<path d="M171.7 82V152M175.3 82V152M179 82V152" stroke="#a4a49c" stroke-width="1.7"/>
<path d="M172.7 82V152M176.3 82V152M180 82V152" stroke="#5c5c56" stroke-width="0.6"/>
</g>
<g filter="url(#tx)">
<path d="M-1 80Q6 72 14 76Q22 70 30 80Q38 84 39 96Q44 104 40 114Q52 116 54 128Q50 140 36 142L-1 144Z" fill="#76852a"/>
<path d="M-1 92Q10 86 16 96Q24 104 18 116Q10 126 -1 124Z" fill="#4f5e1c"/>
<path d="M22 84Q32 86 34 98Q30 108 24 104Q20 94 22 84Z" fill="#98a53a"/>
<path d="M30 118Q42 114 50 124Q48 136 36 138Q28 130 30 118Z" fill="#8f9c34"/>
<path d="M-1 128Q20 122 40 134L40 146L-1 146Z" fill="#3e4c1c"/>
<path d="M183 112Q190 108 192 122Q196 136 193 152L189 166H176L174 148Q172 130 178 118Z" fill="#3f7036"/>
<path d="M184 118Q189 122 189 136Q188 148 184 150Q180 138 184 118Z" fill="#5a8e44" opacity="0.8"/>
<path d="M212 122Q224 112 236 124Q246 134 243 150Q244 164 232 168Q220 172 212 164Q206 152 208 138Q208 128 212 122Z" fill="#527c2c"/>
<path d="M216 128Q226 122 234 132Q238 146 230 154Q220 156 216 146Q213 136 216 128Z" fill="#6e9a38" opacity="0.85"/>
<path d="M200 140Q206 134 210 144L210 166H198Z" fill="#4a7430"/>
</g>
<g filter="url(#b05)">
<rect x="6" y="128" width="64" height="12" fill="#3c4a22"/><rect x="34" y="138" width="36" height="27" fill="#232e1e"/>
<rect x="44" y="146" width="24" height="5" fill="#2c3a58" opacity="0.8"/>
<path d="M4 121.5L70 126.5V132L4 127Z" fill="#e6e2ca"/>
<path d="M4 127L70 132V134L8 129.4Z" fill="#9c987e"/>
<rect x="0" y="138" width="34" height="27" fill="#a9c3c8"/>
<rect x="1" y="138" width="33" height="4" fill="#bdd3d6"/>
<rect x="2.5" y="146" width="3.9" height="11" fill="#f2f4f0"/>
<rect x="7.7" y="146" width="3.9" height="11" fill="#f2f4f0"/>
<rect x="12.9" y="146" width="3.9" height="11" fill="#f2f4f0"/>
<rect x="18.1" y="146" width="3.9" height="11" fill="#f2f4f0"/>
<rect x="23.3" y="146" width="3.9" height="11" fill="#f2f4f0"/>
<rect x="28.5" y="146" width="3.9" height="11" fill="#f2f4f0"/>
<rect x="1" y="158.5" width="33" height="6.5" fill="#23251f"/>
<rect x="15" y="150" width="4.5" height="15" fill="#f4f4f0"/>
<rect x="34" y="154" width="56" height="11" fill="#8a8578"/>
<rect x="36" y="152" width="20" height="13" fill="#6a6a62" opacity="0.7"/>
<rect x="56" y="154" width="12" height="11" fill="#1f1f1c"/>
<rect x="68" y="156" width="22" height="9" fill="#9a927c"/>
<rect x="61.3" y="112" width="1.8" height="54" fill="#c9cbc8"/><rect x="60.3" y="110" width="3.8" height="4" fill="#d8dad6"/>
<path d="M64 148q6-8 12-2q6-6 12 0q6-4 10 2v10h-34z" fill="#3b5a30"/>
<rect x="90.5" y="122" width="10.5" height="43" fill="#1c1c1a"/><rect x="93" y="128" width="5" height="6" fill="#8a7a4a" opacity="0.8"/>
<rect x="102.5" y="152.5" width="24" height="12.5" fill="#a84a3a"/><rect x="105" y="155" width="18" height="4.5" fill="#e6c8b8" opacity="0.75"/><rect x="106" y="161" width="16" height="1.3" fill="#e6c8b8" opacity="0.5"/>
<rect x="134" y="153" width="7" height="12" fill="#e9e7de"/><rect x="135.4" y="155.5" width="3" height="4" fill="#5b6468"/>
<rect x="128" y="155" width="6" height="11" fill="#8c5a48"/>
<rect x="141" y="151" width="18" height="14" fill="#3c3a34"/><rect x="150" y="153" width="12" height="11" fill="#4e6a48"/>
<rect x="-1" y="165" width="248" height="31" fill="url(#road)"/>
<rect x="-1" y="165" width="161" height="2.6" fill="#dcdcd8"/>
<path d="M-1 168L20 167.6L24 169.4L-1 170.4Z" fill="#b2b2ae"/>
<path d="M36.5 176.5L38.5 176.3L43.6 189L41.6 189.4Z" fill="#f2f2f2"/>
<rect x="172" y="152" width="66" height="16" fill="#8c7a66"/>
<rect x="160" y="150" width="14" height="8" fill="#58a878" opacity="0.8"/>
<rect x="176" y="156" width="12" height="6" fill="#b8405a" opacity="0.8"/>
<rect x="196" y="157" width="44" height="8" fill="#6a5a48"/>
<rect x="196" y="166" width="48" height="7" fill="#cfcabc"/>
<path d="M162 166L163.5 136Q166 124 174 126Q183 130 186 166" fill="none" stroke="#b9bbb8" stroke-width="2.6"/>
<path d="M163 168L171 136Q176 126 184 131" fill="none" stroke="#8b8d8a" stroke-width="1.2"/>
<path d="M181 166Q190 146 193 130" fill="none" stroke="#c9cbc8" stroke-width="1.8"/>
<path d="M168 166l6-22l6 22" fill="none" stroke="#d6d8d5" stroke-width="1.1"/>
<rect x="210.4" y="100" width="1.7" height="76" fill="#b2b4b0"/><path d="M204 104q4-4 7-2" stroke="#cfd1cd" stroke-width="1.2" fill="none"/><circle cx="204.5" cy="105.5" r="1.6" fill="#e8e8e4"/>
<path d="M160 168h26l-2 10h-24z" fill="#8e3f34"/><rect x="160" y="166" width="1.8" height="14" fill="#c9c9c4"/>
</g>
<g filter="url(#tx)">
<path d="M143 176Q160 170 186 176L247 172V195H196Q160 188 143 180Z" fill="#5e8c34"/>
<path d="M146 178Q170 176 196 188L247 192V195H196Q160 190 146 182Z" fill="#7aa33e" opacity="0.75"/>
<path d="M181 178Q200 172 222 176Q236 172 247 174V188Q224 194 204 190Q186 188 181 178Z" fill="#6aa22e"/>
<path d="M183 181Q204 178 224 182Q238 178 247 182V190Q222 195 200 191Q186 188 183 181Z" fill="#4f8428" opacity="0.8"/>
<ellipse cx="196" cy="169" rx="10.5" ry="7.5" fill="#4f9430"/><ellipse cx="195" cy="167" rx="7" ry="4.5" fill="#62a83a" opacity="0.9"/>
<ellipse cx="222" cy="174" rx="9" ry="4" fill="#5a9a32"/>
<path d="M236 168Q244 164 247 168V184H238Z" fill="#5c9a34"/>
<path d="M212 190Q230 186 247 188V195H212Z" fill="#3c6e2a"/>
<path d="M142 178Q148 184 170 188Q196 192 214 195" fill="none" stroke="#8c5242" stroke-width="1.8"/>
<path d="M141 180Q148 187 170 191Q186 194 196 195" fill="none" stroke="#c9b7a6" stroke-width="1.2"/>
<rect x="143.5" y="171" width="2" height="6" fill="#2f3a2a"/>
</g>
</g>
</svg>
<div class="abs" style="left:915px;top:300px;width:1.5px;height:198px;background:#dcdcdc"></div><div class="abs" style="left:667px;top:497px;width:249px;height:1px;background:#c9c9c9"></div>
<div id="under" class="abs"></div>
<div id="teal" class="abs"></div>
<div id="status" class="abs"><span style="left:2px">完成</span><span style="left:734.5px;font-family:'Liberation Mono',monospace;font-size:8px;letter-spacing:-0.85px">Internet</span><span style="left:873.5px;font-family:'Liberation Mono',monospace;font-size:8px;letter-spacing:-0.7px">100%</span></div>
<div class="abs sdiv" style="left:694px"></div><div class="abs sdiv" style="left:701px"></div><div class="abs sdiv" style="left:717px"></div><div class="abs sdiv" style="left:825px"></div><div class="abs sdiv" style="left:856px"></div>
<svg class="abs" style="left:719px;top:506px" width="14" height="14" viewBox="0 0 14 14">
 <defs><radialGradient id="gl" cx="0.4" cy="0.35" r="0.7"><stop offset="0" stop-color="#7cc4f4"/><stop offset="0.6" stop-color="#2a78d0"/><stop offset="1" stop-color="#164a9a"/></radialGradient></defs>
 <circle cx="6.8" cy="7.3" r="5.2" fill="url(#gl)"/>
 <path d="M3.2 4.5q2-2 4-1.3q1 1.6-0.6 2.6q-0.6 1.8-2.2 1.6q-1.6-1-1.2-2.9z" fill="#5cc04a"/>
 <path d="M8 7.2q2-1 3.2 0.4q0.2 2.4-1.6 3.8q-1.6-0.6-1.6-4.2z" fill="#4cb040"/>
 <path d="M4.6 9.6q1.2 0 1.6 1.6q-0.8 0.6-1.8-0.4z" fill="#5cc04a"/>
</svg>
<svg class="abs" style="left:832px;top:507px" width="14" height="13" viewBox="0 0 14 13">
 <path d="M2 4.5q2-3 5.5-3q3 0 4.5 2.5l-2 0.6q-1-1.5-2.8-1.5q-2.2 0-3.4 1.8z" fill="#b9b9b4"/>
 <path d="M1.6 2.6l0.8 3.2l2.8-1.2z" fill="#a9a9a4"/>
 <rect x="6.5" y="7" width="5.2" height="4.5" rx="0.6" fill="#8e8e8a"/>
 <path d="M7.6 7.2v-1.3q0-1.5 1.5-1.5q1.5 0 1.5 1.5v1.3" fill="none" stroke="#9a9a96" stroke-width="1"/>
</svg>
<div class="abs" style="left:848.5px;top:512px;width:0;height:0;border:2.2px solid transparent;border-top:2.8px solid #222"></div>
<svg class="abs" style="left:862px;top:506px" width="12" height="13" viewBox="0 0 12 13">
 <circle cx="5" cy="5.2" r="3.3" fill="#d8ecfc" stroke="#3a7ed0" stroke-width="1.4"/>
 <path d="M5 3.6v3.2M3.4 5.2h3.2" stroke="#2a6ec0" stroke-width="0.9"/>
 <path d="M7.4 7.8l3 3.4" stroke="#b07838" stroke-width="1.9" stroke-linecap="round"/>
</svg>
<div class="abs" style="left:899.5px;top:512px;width:0;height:0;border:2.2px solid transparent;border-top:2.8px solid #222"></div>
<svg class="abs" style="left:910px;top:510px" width="10" height="10" viewBox="0 0 10 10"><g fill="#b8b4a0"><rect x="7" y="1" width="1.5" height="1.5"/><rect x="4" y="4" width="1.5" height="1.5"/><rect x="7" y="4" width="1.5" height="1.5"/><rect x="1" y="7" width="1.5" height="1.5"/><rect x="4" y="7" width="1.5" height="1.5"/><rect x="7" y="7" width="1.5" height="1.5"/></g><g fill="#fff"><rect x="8" y="2" width="1" height="1"/><rect x="5" y="5" width="1" height="1"/><rect x="8" y="5" width="1" height="1"/><rect x="2" y="8" width="1" height="1"/><rect x="5" y="8" width="1" height="1"/><rect x="8" y="8" width="1" height="1"/></g></svg>



</div></div>
</body>
</html>
